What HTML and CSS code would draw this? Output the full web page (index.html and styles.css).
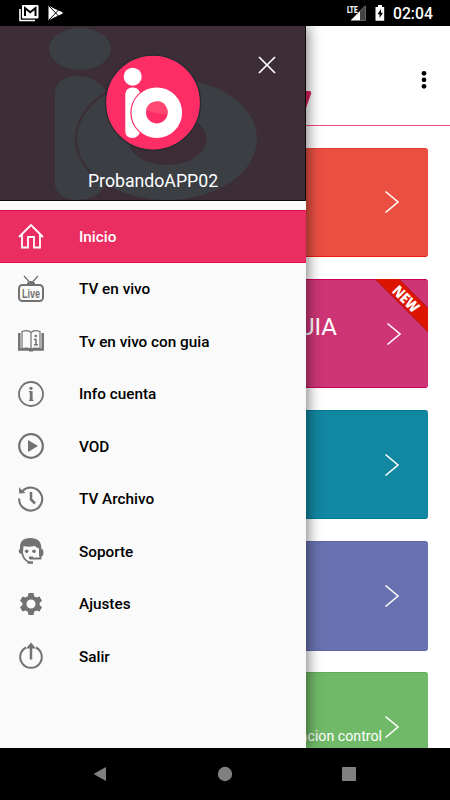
FILE: index.html
```html
<!DOCTYPE html>
<html lang="es">
<head>
<meta charset="utf-8">
<title>ProbandoAPP02</title>
<link rel="stylesheet" href="styles.css">
</head>
<body>
<div class="phone">
  <header class="status">
    <div class="status-left">
      <svg width="20" height="17" viewBox="0 0 20 17"><path d="M1 4v11.500h15" fill="none" stroke="#fff" stroke-width="1.600"/><rect x="3" y="0" width="16.500" height="13.500" rx="1" fill="#fff"/><path d="M6 11V3l5.200 4.300L16.500 3v8" fill="none" stroke="#000" stroke-width="2"/></svg>
      <svg width="16" height="16" viewBox="0 0 16 16"><path d="M.5.500 6 3.500 14.500 7.200V8.800L6 12.500.5 15.500z" fill="#fff"/><path d="M1 1l9.500 10M1 15 10.500 5" stroke="#000" stroke-width="1"/></svg>
    </div>
    <div class="status-right">
      <svg width="20" height="16" viewBox="0 0 20 16"><path d="M19.500.500V15.500H4.500z" fill="#fff"/><path d="M14 6l5.500-5.500v15H14z" fill="#444"/><path d="M0 0h12v7.500l-3 2H0z" fill="#000"/><text x="1" y="7.500" class="lte" textLength="10.500" lengthAdjust="spacingAndGlyphs">LTE</text></svg>
      <svg class="battery" width="10" height="16" viewBox="0 0 10 16"><path d="M3 0h4v2h2.200v13.700H.5V2H3z" fill="#fff"/><path d="M6 4 2.500 9.300h2V13L8 7.700H6z" fill="#000"/></svg>
      <span class="clock">02:04</span>
    </div>
  </header>

  <div class="screen">
    <main class="home">
      <div class="toolbar">
        <svg class="brand" width="12" height="20" viewBox="0 0 12 20"><path d="M0 1h9q3 0 2 3L6 18H0z" fill="#df2465"/></svg>
        <svg width="6" height="20" viewBox="0 0 6 20"><circle cx="3" cy="3.300" r="2.400"/><circle cx="3" cy="9.800" r="2.400"/><circle cx="3" cy="16.300" r="2.400"/></svg>
      </div>
      <div class="cards">
        <section class="card red"><svg class="chev" viewBox="0 0 16 24"><path d="M1.500 1.500 14 12 1.500 22.500"/></svg></section>
        <section class="card pink"><h2>TV CON GUIA</h2><svg class="chev shifted" viewBox="0 0 16 24"><path d="M1.500 1.500 14 12 1.500 22.500"/></svg>
          <svg class="ribbon" width="53" height="53" viewBox="0 0 53 53"><path d="M0 0h24l29 29v24z" fill="#dc1400"/><path d="M0 0l53 53M24 0l29 29" stroke="#b51830" stroke-width="1"/><text transform="translate(31 20) rotate(45)" y="5.300" text-anchor="middle" textLength="31" lengthAdjust="spacingAndGlyphs">NEW</text></svg>
        </section>
        <section class="card teal"><svg class="chev" viewBox="0 0 16 24"><path d="M1.500 1.500 14 12 1.500 22.500"/></svg></section>
        <section class="card violet"><svg class="chev" viewBox="0 0 16 24"><path d="M1.500 1.500 14 12 1.500 22.500"/></svg></section>
        <section class="card green"><svg class="chev" viewBox="0 0 16 24"><path d="M1.500 1.500 14 12 1.500 22.500"/></svg></section>
      </div>
      <p class="toast">acion control</p>
    </main>

    <aside class="drawer">
      <div class="profile">
        <svg class="art" width="306" height="175" viewBox="0 0 306 175">
          <rect width="306" height="175" fill="#3c2d36"/>
          <g fill="#3b3f43">
            <ellipse cx="80" cy="22.800" rx="31" ry="21"/>
            <path d="M55 66Q57 50 78 50Q93 50 103 61L122 90V142L103 163Q93 174 78 174Q59 174 55 160z"/>
          </g>
          <ellipse cx="165" cy="113" rx="90" ry="63" fill="#3c2d36"/>
          <path fill="#3b3f43" fill-rule="evenodd" d="M77 113a90 61 0 1 0 180 0a90 61 0 1 0-180 0zM127.500 113a39.500 26 0 1 0 79 0a39.500 26 0 1 0-79 0z"/>
          <circle cx="153" cy="76.700" r="47.500" fill="#ff2d66" stroke="#232c31" stroke-width="1.300"/>
          <circle cx="132.700" cy="50.700" r="9" fill="#fff"/>
          <path d="M125.300 68Q126 61.500 132.500 61.500Q137 61.500 139 64.500L146 86L139 108.500Q136 112 132.500 112Q125.300 112 125.300 105z" fill="#fff"/>
          <circle cx="156.300" cy="86.700" r="26" fill="#ff2d66"/>
          <circle cx="156.800" cy="86.700" r="18" fill="none" stroke="#fff" stroke-width="14.500"/>
          <path d="M146.200 84a10.800 10.800 0 0 1 21.300 4q-10 1-21.300-4" fill="#ff4772"/>
          <path d="M0 174.500H305.500V0" fill="none" stroke="#0c080a"/>
        </svg>
        <svg class="close" width="18" height="18" viewBox="0 0 18 18"><path d="M1 1 17 17M17 1 1 17" stroke="#fff" stroke-width="1.700"/></svg>
        <div class="name">ProbandoAPP02</div>
      </div>
      <nav class="menu">
        <a class="item active"><svg viewBox="0 0 26 26" class="line"><path d="M1 14 13 2 25 14M4 11.500V24.500H10V14H16V24.500H22V11.500" stroke-width="1.800"/></svg>Inicio</a>
        <a class="item"><svg viewBox="0 0 26 26" class="line"><rect x="1" y="9" width="24" height="16" rx="3.500" stroke-width="2"/><path d="M6 0l5 5.500M20 0l-5 5.500" stroke-width="1.300"/><path d="M9 8q0-3 4-3t4 3z" class="solid"/><text x="13" y="21.500" class="live" textLength="18" lengthAdjust="spacingAndGlyphs">Live</text></svg>TV en vivo</a>
        <a class="item"><svg viewBox="0 0 26 26" class="line"><path d="M4 3.500v17q6-1 9 1 3-2 9-1v-17q-6-2-9 1-3-3-9-1zM13 4.500v16" stroke-width="1.200"/><path d="M1.300 5v16.500h23.400V5" stroke-width="2.500"/><path d="M11 21h4v2.500h-4z" class="solid"/><circle cx="17.800" cy="8" r="1.300" class="solid"/><path d="M16 11.500h2v5M16 16.800h4" stroke-width="1.500"/></svg>Tv en vivo con guia</a>
        <a class="item"><svg viewBox="0 0 26 26" class="line"><circle cx="13" cy="13" r="12" stroke-width="1.800"/><circle cx="13" cy="7.300" r="1.600" class="solid"/><path d="M11 10.700h2.300M11 19.300h4.500" stroke-width="1.200"/><path d="M13.200 10.200v9" stroke-width="2.800"/></svg>Info cuenta</a>
        <a class="item"><svg viewBox="0 0 26 26" class="line"><circle cx="13" cy="13" r="11.800" stroke-width="2.200"/><path d="M10 7v12l10-6z" class="solid"/></svg>VOD</a>
        <a class="item"><svg viewBox="0 0 26 26" class="line"><path d="M4.500 5A11.500 11.500 0 1 1 1.200 12.500" stroke-width="2.100"/><path d="M1 1l1.700 2L7.500 7 1.200 7.500z" class="solid"/><path d="M13 6v7.500l4 4" stroke-width="2.500"/></svg>TV Archivo</a>
        <a class="item"><svg viewBox="0 0 26 26" class="line"><path d="M2 11Q1 0 12.500 0 23.500 0 23.300 10.500 25.500 11 25.500 14 25.500 17.500 24 18.500L21 18V10.500Q18 9.500 17 8 10 9.500 5.500 8L5 14 3 16Q.7 15.500.7 13q0-1.500 1.300-2z" class="solid"/><path d="M4 14q1 8 7 10" stroke-width="1.800"/><circle cx="8.700" cy="13.300" r="1.800" class="solid"/><circle cx="16" cy="13.300" r="1.800" class="solid"/><path d="M22.500 16.500V20.500H12" stroke-width="1.800"/><path d="M9.500 24.500H15M11 19.800H15" stroke-width="2.500"/></svg>Soporte</a>
        <a class="item"><svg viewBox="0 0 26 26"><path fill-rule="evenodd" d="M10.500 2h5l.7 3.200 2.200 1.300 3.100-1 2.500 4.300-2.400 2.200v2l2.400 2.200-2.500 4.300-3.100-1-2.200 1.300-.7 3.200h-5l-.7-3.200L7.600 19.500l-3.100 1L2 16.200l2.400-2.200v-2L2 9.800 4.500 5.500l3.100 1 2.200-1.300zM13 8.500a4.500 4.500 0 1 0 0 9 4.500 4.500 0 0 0 0-9z"/></svg>Ajustes</a>
        <a class="item"><svg viewBox="0 0 26 26" class="line"><path d="M8 4.500a10.800 10.800 0 1 0 10 0" stroke-width="2"/><path d="M13 16.500V4" stroke-width="2.500"/><path d="M13-.5 18 5.500H8z" class="solid"/></svg>Salir</a>
      </nav>
    </aside>
  </div>

  <footer class="navbar">
    <svg width="14" height="16" viewBox="0 0 14 16"><path d="M.5 8 13 1v14z"/></svg>
    <svg width="16" height="16" viewBox="0 0 16 16"><circle cx="8" cy="8" r="7.200"/></svg>
    <svg width="14" height="14" viewBox="0 0 14 14"><rect width="14" height="14" rx=".5"/></svg>
  </footer>
</div>
</body>
</html>
```
FILE: styles.css
```css
* { box-sizing: border-box; }
body { margin: 0; font-family: Roboto, "Liberation Sans", sans-serif; }
svg { display: block; flex: none; overflow: visible; }
.phone { width: 450px; height: 800px; display: flex; flex-direction: column; overflow: hidden; background: #fff; }
.status { height: 26px; flex: none; background: #000; color: #fff; display: flex; justify-content: space-between; align-items: center; padding: 0 17px 0 19px; }
.status-left, .status-right { display: flex; align-items: center; }
.status-left { gap: 9px; }
.battery { margin: 0 8px 0 9px; }
.clock { font-size: 15.700px; font-weight: 500; line-height: 26px; width: 40px; padding-top: 2px; }
.lte { font-size: 9.500px; font-weight: 900; fill: #fff; }
.screen { position: relative; flex: 1; min-height: 0; overflow: hidden; }
.toolbar { height: 100px; border-bottom: 1px solid #f04a76; display: flex; justify-content: space-between; align-items: flex-start; padding: 44px 23px 0 300px; }
.brand { margin-top: 20px; }
.cards { padding: 21.600px 22px 0; display: grid; grid-auto-rows: 109.500px; gap: 21.700px; }
.card { position: relative; border-radius: 3px; display: flex; align-items: center; justify-content: flex-end; padding-right: 28px; border-top: 1px solid; border-bottom: 1px solid; color: #fff; }
.red { background: #ea4f42; border-color: #ee1a10; border-top-color: #e84031; }
.pink { background: #cd3575; border-color: #c9005d; }
.teal { background: #1187a1; border-color: #007a98; }
.violet { background: #6872b0; border-color: #5d68aa; }
.green { background: #70b968; border-color: #5fae57; }
.card h2 { margin: 0 49px 14px 0; font-size: 24px; line-height: 28px; font-weight: 400; }
.chev { width: 16px; height: 24px; fill: none; stroke: #fff; stroke-width: 1.600; }
.shifted { margin-right: -2px; }
.ribbon { position: absolute; top: -1px; right: 0; }
.ribbon text { fill: #fff; font-size: 15px; font-weight: 800; font-family: "Open Sans", sans-serif; }
.toast { position: absolute; right: 68px; bottom: 3px; margin: 0; font-size: 14.200px; line-height: 18px; color: #fff; }
.drawer { position: absolute; left: 0; top: 0; width: 306px; height: 100%; background: #fafafa; box-shadow: 2px 0 13px rgba(0,0,0,.5); }
.profile { position: relative; height: 184px; }
.art { overflow: hidden; }
.close { position: absolute; left: 258px; top: 30px; }
.name { position: absolute; left: 0; right: 0; top: 144px; text-align: center; color: #fff; font-size: 17.700px; line-height: 22px; }
.menu { display: grid; grid-auto-rows: 52.500px; }
.item { display: flex; align-items: center; gap: 35px; padding: 1px 0 0 18px; color: #000; font-size: 15.300px; font-weight: 500; }
.item svg { width: 26px; height: 26px; margin-top: -1px; fill: #727272; color: #727272; }
.item .line { fill: none; stroke: currentColor; }
.item .solid { fill: currentColor; stroke: none; }
.item.active { background: #eb2e62; border-top: 1px solid #e30b4c; border-bottom: 1px solid #e30b4c; color: #fff; }
.item.active svg { color: #fff; }
.item .live { fill: #727272; stroke: none; font: 700 12px "Liberation Sans", sans-serif; text-anchor: middle; }
.navbar { height: 52px; flex: none; background: #000; display: flex; align-items: center; justify-content: space-between; padding: 0 94px 0 93px; fill: #808080; }
```
